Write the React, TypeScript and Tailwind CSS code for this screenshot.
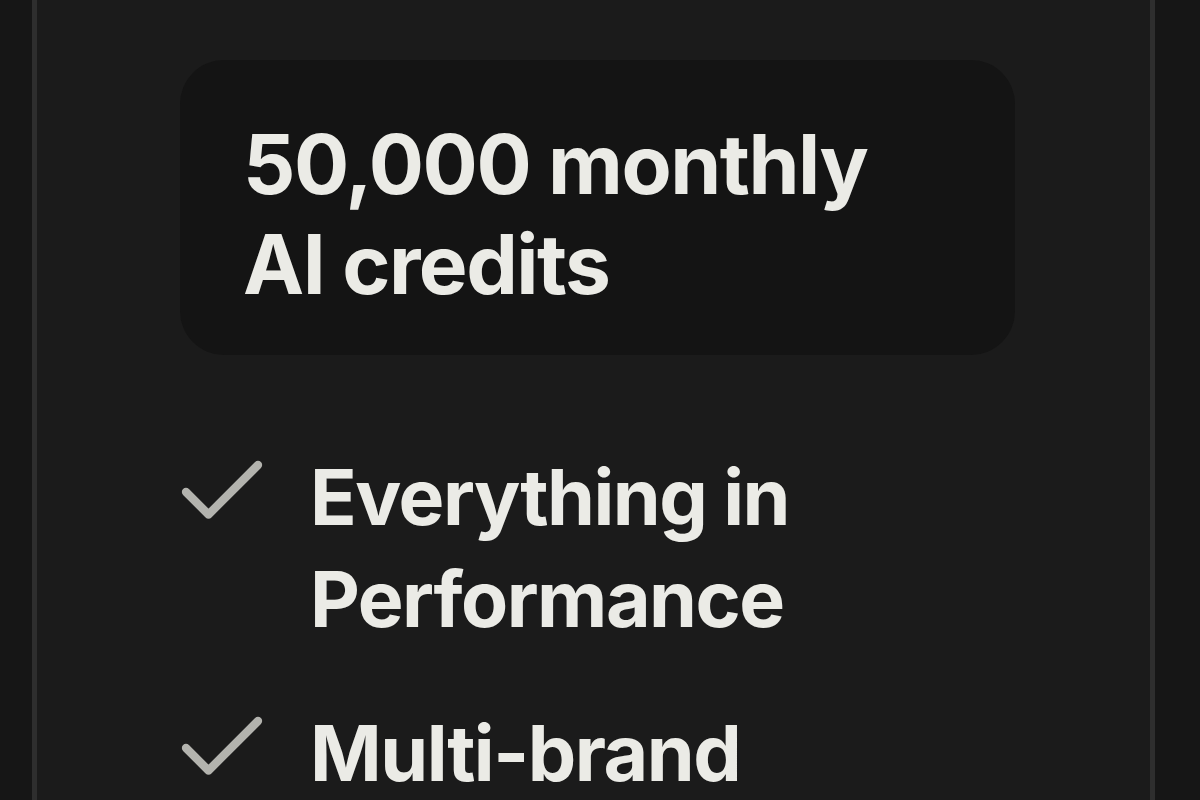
import React from "react";
import { Check } from "lucide-react";

const features = ["Everything in Performance", "Multi-brand"];

const App = () => {
  return (
    <div
      className="h-screen overflow-hidden bg-[#161616] flex"
      style={{ fontFamily: "Inter, 'Noto Sans', sans-serif" }}
    >
      {/* Plan card */}
      <div className="ml-[32px] w-[1123px] h-full bg-[#1b1b1b] border-x-[5px] border-[#2e2e2e] pl-[143px] pr-[135px] pt-[60px]">
        {/* Credits box */}
        <div className="rounded-[44px] bg-[#141414] pl-[63px] pr-[40px] pt-[55px] pb-[40px]">
          <p className="text-[82px] leading-[100px] font-bold tracking-[-1.5px] text-[#ebebe6] max-w-[660px]">
            50,000 monthly AI credits
          </p>
        </div>

        {/* Feature list */}
        <ul className="mt-[91px] flex flex-col gap-[52px]">
          {features.map((feature, index) => (
            <li key={index} className="flex items-start">
              <Check
                size={108}
                strokeWidth={1.85}
                className="shrink-0 text-[#b3b3ae] -ml-[12px] -mt-[8px]"
              />
              <span className="ml-[34px] text-[77px] leading-[102px] font-bold tracking-[-1.5px] text-[#ebebe6] max-w-[560px]">
                {feature}
              </span>
            </li>
          ))}
        </ul>
      </div>
    </div>
  );
};

export default App;
